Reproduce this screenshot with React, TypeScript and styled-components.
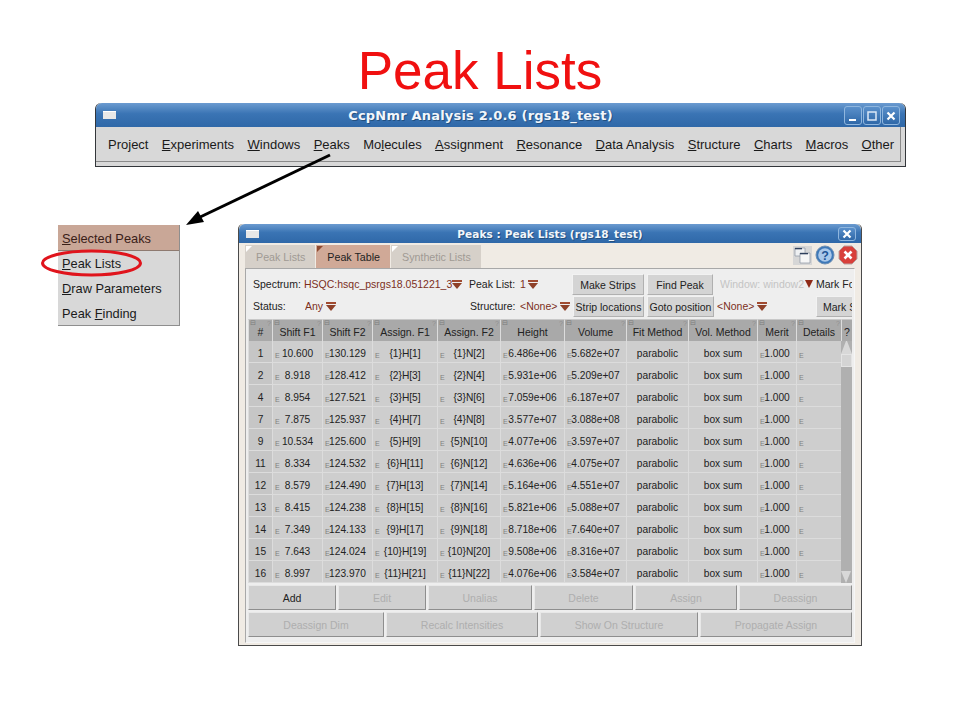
import React from 'react';
import styled, { createGlobalStyle } from 'styled-components';

const MENU_ITEMS: [string, string, string][] = [
  ['Pro', 'j', 'ect'],
  ['', 'E', 'xperiments'],
  ['', 'W', 'indows'],
  ['', 'P', 'eaks'],
  ['Mo', 'l', 'ecules'],
  ['', 'A', 'ssignment'],
  ['', 'R', 'esonance'],
  ['', 'D', 'ata Analysis'],
  ['', 'S', 'tructure'],
  ['', 'C', 'harts'],
  ['', 'M', 'acros'],
  ['', 'O', 'ther'],
];

const POPUP_ITEMS: [string, string, string][] = [
  ['', 'S', 'elected Peaks'],
  ['', 'P', 'eak Lists'],
  ['', 'D', 'raw Parameters'],
  ['Peak ', 'F', 'inding'],
];

const COLUMNS = [
  '#', 'Shift F1', 'Shift F2', 'Assign. F1', 'Assign. F2', 'Height', 'Volume',
  'Fit Method', 'Vol. Method', 'Merit', 'Details',
];

const PEAKS = [
  ['1', '10.600', '130.129', '{1}H[1]', '{1}N[2]', '6.486e+06', '5.682e+07'],
  ['2', '8.918', '128.412', '{2}H[3]', '{2}N[4]', '5.931e+06', '5.209e+07'],
  ['4', '8.954', '127.521', '{3}H[5]', '{3}N[6]', '7.059e+06', '6.187e+07'],
  ['7', '7.875', '125.937', '{4}H[7]', '{4}N[8]', '3.577e+07', '3.088e+08'],
  ['9', '10.534', '125.600', '{5}H[9]', '{5}N[10]', '4.077e+06', '3.597e+07'],
  ['11', '8.334', '124.532', '{6}H[11]', '{6}N[12]', '4.636e+06', '4.075e+07'],
  ['12', '8.579', '124.490', '{7}H[13]', '{7}N[14]', '5.164e+06', '4.551e+07'],
  ['13', '8.415', '124.238', '{8}H[15]', '{8}N[16]', '5.821e+06', '5.088e+07'],
  ['14', '7.349', '124.133', '{9}H[17]', '{9}N[18]', '8.718e+06', '7.640e+07'],
  ['15', '7.643', '124.024', '{10}H[19]', '{10}N[20]', '9.508e+06', '8.316e+07'],
  ['16', '8.997', '123.970', '{11}H[21]', '{11}N[22]', '4.076e+06', '3.584e+07'],
];

const ACTIONS = ['Add', 'Edit', 'Unalias', 'Delete', 'Assign', 'Deassign'];
const ACTIONS_2 = ['Deassign Dim', 'Recalc Intensities', 'Show On Structure', 'Propagate Assign'];

function Mnemonic({ item }: { item: [string, string, string] }) {
  return (
    <>
      {item[0]}
      <u>{item[1]}</u>
      {item[2]}
    </>
  );
}

function Pulldown() {
  return (
    <svg width="10" height="9" viewBox="0 0 10 9">
      <path d="M0 0h10v2H0z" fill="#a04a30" />
      <path d="M0 3h10L5 9z" fill="#8e4028" />
    </svg>
  );
}

function CloseGlyph() {
  return (
    <svg width="10" height="10" viewBox="0 0 10 10">
      <path d="M1.5 1.500l7 7M8.500 1.500l-7 7" stroke="#fff" strokeWidth="2.200" />
    </svg>
  );
}

export default function App() {
  return (
    <Page>
      <GlobalStyle />
      <Title>Peak Lists</Title>

      <MainWindow>
        <TitleBar $height={24}>
          <TitleGlyph />
          <TitleText $size={13} $spacing={0.2} $shift={40}>CcpNmr Analysis 2.0.6 (rgs18_test)</TitleText>
          <WinButtons>
            <WinButton>
              <svg width="10" height="10" viewBox="0 0 10 10"><path d="M1 8h7v2H1z" fill="#fff" /></svg>
            </WinButton>
            <WinButton>
              <svg width="10" height="10" viewBox="0 0 10 10"><path d="M1 1h8v8H1z" fill="none" stroke="#dbe8f6" strokeWidth="1.500" /></svg>
            </WinButton>
            <WinButton>
              <CloseGlyph />
            </WinButton>
          </WinButtons>
        </TitleBar>
        <MenuBar>
          {MENU_ITEMS.map((item) => (
            <MenuItem key={item.join('')}>
              <Mnemonic item={item} />
            </MenuItem>
          ))}
        </MenuBar>
      </MainWindow>

      <LowerRow>
        <Popup>
          {POPUP_ITEMS.map((item, i) => (
            <PopupItem key={item.join('')} $active={i === 0}>
              <Mnemonic item={item} />
            </PopupItem>
          ))}
        </Popup>

        <PeaksWindow>
          <TitleBar $height={19}>
            <TitleGlyph />
            <TitleText $size={10.500} $spacing={0.1} $shift={0}>Peaks : Peak Lists (rgs18_test)</TitleText>
            <WinButtons>
              <WinButton>
                <CloseGlyph />
              </WinButton>
            </WinButtons>
          </TitleBar>
          <Body>
            <TabRow>
              <Tab>Peak Lists</Tab>
              <Tab $active>Peak Table</Tab>
              <Tab>Synthetic Lists</Tab>
              <ToolIcons>
                <ToolButton>
                  <svg width="17" height="17" viewBox="0 0 17 17">
                    <path d="M1 1h10v8H1z" fill="#eef0f2" stroke="#8a93a0" strokeWidth="0.700" />
                    <path d="M1 1h7v1.300H1z" fill="#2e3f5c" />
                    <path d="M6 6h10v10H6z" fill="#f6f6f6" stroke="#8a93a0" strokeWidth="0.700" />
                    <path d="M6 6h8v1.300H6z" fill="#2e3f5c" />
                  </svg>
                </ToolButton>
                <svg width="20" height="20" viewBox="0 0 20 20">
                  <circle cx="10" cy="10" r="9" fill="#3d78b8" stroke="#6d8fb4" />
                  <circle cx="10" cy="10" r="6.800" fill="#a9c8ea" />
                  <text x="10" y="14.500" textAnchor="middle" fontFamily="Liberation Sans" fontWeight="bold" fontSize="12.500" fill="#1e5596">?</text>
                </svg>
                <svg width="20" height="20" viewBox="0 0 20 20">
                  <path d="M6 1h8l5 5v8l-5 5H6l-5-5V6z" fill="#d8403a" stroke="#b9a2a0" strokeLinejoin="round" />
                  <path d="M6.500 6.500l7 7M13.500 6.500l-7 7" stroke="#fff" strokeWidth="2.600" />
                </svg>
              </ToolIcons>
            </TabRow>

            <Panel>
              <Controls>
                <ControlRow>
                  <Cell $w={51}>Spectrum:</Cell>
                  <Value $w={148}>HSQC:hsqc_psrgs18.051221_3</Value>
                  <Cell $w={17}><Pulldown /></Cell>
                  <Cell $w={51}>Peak List:</Cell>
                  <Value $w={8}>1</Value>
                  <Cell $w={44}><Pulldown /></Cell>
                  <ControlButton $w={72}>Make Strips</ControlButton>
                  <ControlButton $w={66}>Find Peak</ControlButton>
                  <Dim $w={85}>Window: window2</Dim>
                  <Cell $w={11}>
                    <svg width="8" height="8" viewBox="0 0 8 8"><path d="M0 0h8L4 8z" fill="#8e2a18" /></svg>
                  </Cell>
                  <Cell $w={37}>Mark Fo</Cell>
                </ControlRow>
                <ControlRow>
                  <Cell $w={52}>Status:</Cell>
                  <Value $w={21}>Any</Value>
                  <Cell $w={144}><Pulldown /></Cell>
                  <Cell $w={50}>Structure:</Cell>
                  <Value $w={40}>&lt;None&gt;</Value>
                  <Cell $w={13}><Pulldown /></Cell>
                  <ControlButton $w={71}>Strip locations</ControlButton>
                  <ControlButton $w={67}>Goto position</ControlButton>
                  <Value $w={40}>&lt;None&gt;</Value>
                  <Cell $w={59}><Pulldown /></Cell>
                  <ControlButton $w={37} $clip>Mark S</ControlButton>
                </ControlRow>
              </Controls>

              <TableArea>
                <Table>
                  <HeaderRow>
                    {COLUMNS.map((name) => (
                      <HeadCell key={name}>
                        <Fold>⊟</Fold>
                        <Hint>?</Hint>
                        {name}
                      </HeadCell>
                    ))}
                  </HeaderRow>
                  {PEAKS.map((peak) => (
                    <DataRow key={peak[0]}>
                      {peak.map((value, i) => (
                        <DataCell key={i}>
                          {i > 0 && <EditMark>E</EditMark>}
                          {value}
                        </DataCell>
                      ))}
                      <DataCell>parabolic</DataCell>
                      <DataCell>box sum</DataCell>
                      <DataCell>
                        <EditMark>E</EditMark>
                        1.000
                      </DataCell>
                      <DataCell>
                        <EditMark>E</EditMark>
                      </DataCell>
                    </DataRow>
                  ))}
                </Table>
                <ScrollColumn>
                  <HeadCell>?</HeadCell>
                  <ScrollTrack>
                    <ArrowUp />
                    <Thumb />
                    <ArrowDown />
                  </ScrollTrack>
                </ScrollColumn>
              </TableArea>

              <ButtonGrid $columns="90px 90px 106px 101px 104px 113px">
                {ACTIONS.map((label, i) => (
                  <ActionButton key={label} $enabled={i === 0}>{label}</ActionButton>
                ))}
              </ButtonGrid>
              <ButtonGrid $columns="138px 154px 160px 152px">
                {ACTIONS_2.map((label) => (
                  <ActionButton key={label}>{label}</ActionButton>
                ))}
              </ButtonGrid>
            </Panel>
          </Body>
        </PeaksWindow>
      </LowerRow>

      <Overlay width="960" height="720" viewBox="0 0 960 720">
        <path d="M330 155L196 219" stroke="#000" strokeWidth="3" fill="none" />
        <path d="M186 225l12-14 6 11z" fill="#000" />
        <ellipse cx="91.500" cy="263" rx="49" ry="12" fill="none" stroke="#e0141c" strokeWidth="3" />
      </Overlay>
    </Page>
  );
}

const GlobalStyle = createGlobalStyle`
  html, body {
    margin: 0;
    padding: 0;
    background: #fff;
  }
  body {
    font-family: "Liberation Sans", Arial, sans-serif;
  }
`;

const Page = styled.div`
  position: relative;
  width: 960px;
  height: 720px;
  overflow: hidden;
  background: #fff;
`;

const Title = styled.h1`
  height: 103px;
  margin: 0;
  padding-top: 38px;
  box-sizing: border-box;
  font-size: 53px;
  line-height: 65px;
  font-weight: normal;
  text-align: center;
  color: #f01010;
`;

const MainWindow = styled.div`
  width: 811px;
  height: 64px;
  margin-left: 95px;
  box-sizing: border-box;
  border: 1px solid #33363a;
  border-top: 0;
  border-radius: 6px 6px 0 0;
  background: #d8d8d8;
`;

const TitleBar = styled.div<{ $height: number }>`
  position: relative;
  display: flex;
  align-items: center;
  justify-content: center;
  height: ${(p) => p.$height}px;
  border-radius: 6px 6px 0 0;
  background: linear-gradient(#6b9bd0, #3a74b4 45%, #2f68a8);
`;

const TitleGlyph = styled.span`
  position: absolute;
  left: 7px;
  top: 50%;
  width: 13px;
  height: 8px;
  margin-top: -4px;
  background: #e8e8e8;
  border-top: 1px solid #fff;
  box-sizing: border-box;
`;

const TitleText = styled.span<{ $size: number; $spacing: number; $shift: number }>`
  margin-right: ${(p) => p.$shift}px;
  font-family: "DejaVu Sans", sans-serif;
  font-weight: bold;
  font-size: ${(p) => p.$size}px;
  letter-spacing: ${(p) => p.$spacing}px;
  color: #f2f6fb;
  text-shadow: 1px 1px 0 #23507f;
`;

const WinButtons = styled.div`
  position: absolute;
  right: 5px;
  top: 3px;
  bottom: 2px;
  display: flex;
  gap: 1px;
`;

const WinButton = styled.span`
  display: flex;
  align-items: center;
  justify-content: center;
  width: 18px;
  box-sizing: border-box;
  border: 1px solid #8fb6de;
  border-radius: 3px;
  background: linear-gradient(#5a90cb, #2f68a8);
`;

const MenuBar = styled.div`
  display: flex;
  gap: 13.400px;
  height: 34px;
  padding: 0 0 0 12px;
  margin-right: 4px;
  align-items: center;
  border-bottom: 1px solid #8a8a8a;
  border-right: 1px solid #8a8a8a;
`;

const MenuItem = styled.span`
  font-size: 13px;
  color: #1a1a1a;
  white-space: nowrap;
`;

const LowerRow = styled.div`
  display: flex;
  align-items: flex-start;
  gap: 58px;
  margin: 57px 0 0 58px;
`;

const Popup = styled.div`
  width: 122px;
  margin-top: 1px;
  box-sizing: border-box;
  background: #d8d8d8;
  border-right: 1px solid #8e8e8e;
  border-bottom: 1px solid #8e8e8e;
`;

const PopupItem = styled.div<{ $active?: boolean }>`
  height: 25px;
  padding-left: 4px;
  font-size: 12.800px;
  line-height: 28px;
  color: ${(p) => (p.$active ? '#3a2018' : '#1a1a1a')};
  background: ${(p) => (p.$active ? '#c9a797' : 'transparent')};
  border-bottom: ${(p) => (p.$active ? '1px solid #8e7a70' : '0')};
  margin-bottom: ${(p) => (p.$active ? '-1px' : '0')};
`;

const PeaksWindow = styled.div`
  width: 624px;
  height: 422px;
  box-sizing: border-box;
  border: 1px solid #4a4a4a;
  border-top: 0;
  border-radius: 5px 5px 0 0;
  background: #f0ebe4;
`;

const Body = styled.div`
  padding: 2px 6px 0 6px;
`;

const TabRow = styled.div`
  position: relative;
  display: flex;
  gap: 1px;
  height: 23px;
`;

const Tab = styled.div<{ $active?: boolean }>`
  position: relative;
  padding: 0 10px 0 11px;
  font-size: 10.700px;
  line-height: 25px;
  color: ${(p) => (p.$active ? '#222' : '#a09a94')};
  background: ${(p) => (p.$active ? '#d0a997' : '#d6d0c9')};
  &::before {
    content: '';
    position: absolute;
    left: 1px;
    top: 1px;
    border-style: solid;
    border-width: 6px 6px 0 0;
    border-color: ${(p) => (p.$active ? '#8e4a30' : '#fff')} transparent transparent transparent;
  }
`;

const ToolIcons = styled.div`
  position: absolute;
  right: -3px;
  top: 0;
  display: flex;
  align-items: center;
  gap: 3px;
`;

const ToolButton = styled.span`
  display: flex;
  align-items: center;
  justify-content: center;
  width: 19px;
  height: 19px;
  background: #d6d6d6;
  box-sizing: border-box;
`;

const Panel = styled.div`
  box-sizing: border-box;
  width: 610px;
  height: 375px;
  padding: 4px 2px 0 2px;
  border: 1px solid #a8a8a8;
  border-right-color: #f6f6f6;
  border-bottom-color: #f6f6f6;
  background: #eeeeee;
`;

const Controls = styled.div`
  display: flex;
  flex-direction: column;
  height: 46px;
  padding-left: 5px;
  overflow: hidden;
`;

const ControlRow = styled.div`
  display: flex;
  align-items: center;
  height: 22px;
`;

const Cell = styled.span<{ $w: number }>`
  display: flex;
  align-items: center;
  flex: none;
  width: ${(p) => p.$w}px;
  font-size: 10.500px;
  color: #222;
  white-space: nowrap;
  overflow: hidden;
`;

const Value = styled(Cell)`
  color: #7c2e1c;
`;

const Dim = styled(Cell)`
  color: #c4c4c4;
  margin-left: 4px;
`;

const ControlButton = styled.span<{ $w: number; $clip?: boolean }>`
  flex: none;
  box-sizing: border-box;
  width: ${(p) => p.$w}px;
  height: 21px;
  margin-right: ${(p) => (p.$clip ? '0' : '3px')};
  padding-left: ${(p) => (p.$clip ? '6px' : '0')};
  font-size: 10.500px;
  line-height: 20px;
  text-align: ${(p) => (p.$clip ? 'left' : 'center')};
  white-space: nowrap;
  overflow: hidden;
  color: #222;
  background: #d4d4d4;
  border-top: 1px solid #f2f2f2;
  border-left: 1px solid #f2f2f2;
  border-bottom: 1px solid #b0b0b0;
  border-right: ${(p) => (p.$clip ? '0' : '1px solid #b0b0b0')};
`;

const TableArea = styled.div`
  display: flex;
  height: 264px;
  overflow: hidden;
`;

const TABLE_COLUMNS = '24px 50px 50px 65px 63px 64px 62px 62px 69px 39px 45px';

const Table = styled.div`
  width: 593px;
`;

const HeaderRow = styled.div`
  display: grid;
  grid-template-columns: ${TABLE_COLUMNS};
  height: 22px;
`;

const HeadCell = styled.div`
  position: relative;
  font-size: 10.500px;
  line-height: 25px;
  height: 22px;
  box-sizing: border-box;
  text-align: center;
  color: #222;
  background: #a9a9a9;
  border-left: 1px solid #dcdcdc;
  border-top: 1px solid #c8c8c8;
`;

const Fold = styled.span`
  position: absolute;
  left: 1px;
  top: -1px;
  font-size: 7px;
  line-height: 8px;
  color: #7c7c7c;
`;

const Hint = styled.span`
  position: absolute;
  right: 1px;
  top: 0;
  font-size: 7px;
  line-height: 8px;
  color: #909090;
`;

const DataRow = styled.div`
  display: grid;
  grid-template-columns: ${TABLE_COLUMNS};
  height: 22px;
`;

const DataCell = styled.div`
  position: relative;
  box-sizing: border-box;
  font-size: 10.200px;
  line-height: 26px;
  text-align: center;
  white-space: nowrap;
  overflow: hidden;
  color: #222;
  background: #cecece;
  border-left: 1px solid #dcdcdc;
  border-bottom: 1px solid #dcdcdc;
  &:first-child {
    background: #c6c6c6;
  }
`;

const EditMark = styled.span`
  position: absolute;
  left: 2px;
  bottom: 2px;
  font-size: 7px;
  line-height: 8px;
  color: #808080;
`;

const ScrollColumn = styled.div`
  width: 11px;
  display: flex;
  flex-direction: column;
`;

const ScrollTrack = styled.div`
  position: relative;
  flex: 1;
  background: #b0b0b0;
`;

const Thumb = styled.div`
  height: 13px;
  box-sizing: border-box;
  background: #d4d4d4;
  border: 1px solid #e4e4e4;
`;

const ArrowUp = styled.div`
  height: 0;
  border-style: solid;
  border-width: 0 5.500px 13px 5.500px;
  border-color: transparent transparent #d8d8d8 transparent;
`;

const ArrowDown = styled.div`
  position: absolute;
  left: 0;
  bottom: 0;
  height: 0;
  border-style: solid;
  border-width: 12px 5.500px 0 5.500px;
  border-color: #d8d8d8 transparent transparent transparent;
`;

const ButtonGrid = styled.div<{ $columns: string }>`
  display: grid;
  grid-template-columns: ${(p) => p.$columns};
  height: 27px;
  margin-top: 2px;
  &:last-child {
    margin-top: 0;
  }
`;

const ActionButton = styled.div<{ $enabled?: boolean }>`
  box-sizing: border-box;
  height: 25px;
  margin-right: 2px;
  font-size: 10.500px;
  line-height: 25px;
  text-align: center;
  color: ${(p) => (p.$enabled ? '#222' : '#aeaeae')};
  background: #d0d0d0;
  border-top: 1px solid #e8e8e8;
  border-left: 1px solid #e8e8e8;
  border-right: 1px solid #8e8e8e;
  border-bottom: 1px solid #8e8e8e;
  &:last-child {
    margin-right: 0;
  }
`;

const Overlay = styled.svg`
  position: absolute;
  left: 0;
  top: 0;
  pointer-events: none;
`;
